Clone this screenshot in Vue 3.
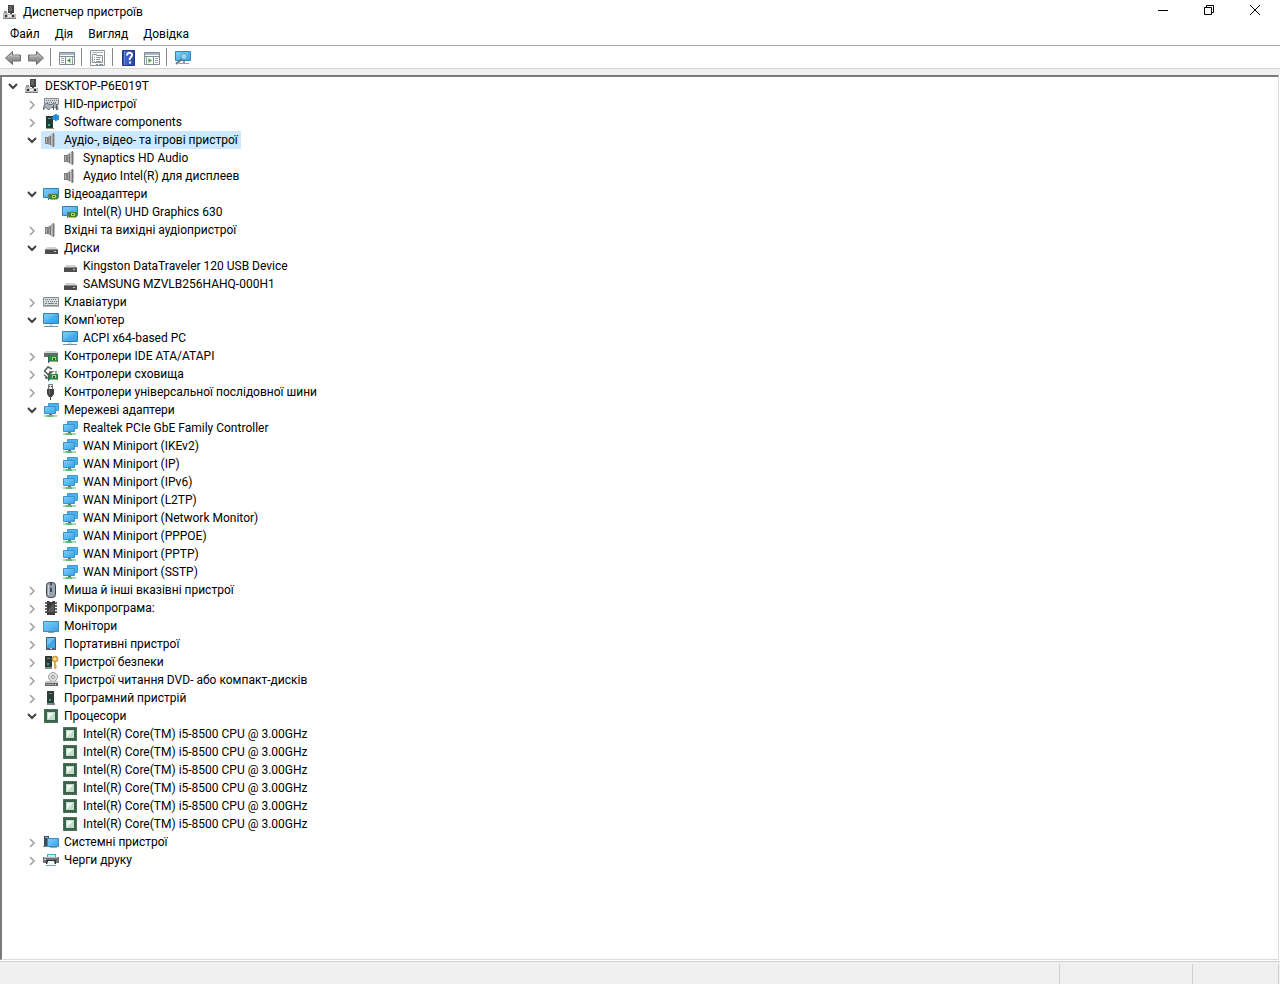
<script setup>
import { ref, computed } from 'vue'

const menus = ['Файл', 'Дія', 'Вигляд', 'Довідка']

const toolbar = [
  { icon: 'back', label: 'Назад' },
  { icon: 'forward', label: 'Вперед' },
  { sep: true },
  { icon: 'tree-pane', label: 'Дерево консолі' },
  { sep: true },
  { icon: 'properties', label: 'Властивості' },
  { sep: true },
  { icon: 'help', label: 'Довідка' },
  { icon: 'action-pane', label: 'Панель дій' },
  { sep: true },
  { icon: 'scan', label: 'Оновити конфігурацію обладнання' },
]

const many = (icon, names) => names.map((name) => ({ name, icon }))

const root = {
  name: 'DESKTOP-P6E019T',
  icon: 'host',
  open: true,
  children: [
    { name: 'HID-пристрої', icon: 'hid', children: [] },
    { name: 'Software components', icon: 'software', children: [] },
    {
      name: 'Аудіо-, відео- та ігрові пристрої', icon: 'speaker', open: true,
      children: many('speaker', ['Synaptics HD Audio', 'Аудио Intel(R) для дисплеев']),
    },
    { name: 'Відеоадаптери', icon: 'display', open: true, children: many('display', ['Intel(R) UHD Graphics 630']) },
    { name: 'Вхідні та вихідні аудіопристрої', icon: 'speaker', children: [] },
    {
      name: 'Диски', icon: 'disk', open: true,
      children: many('disk', ['Kingston DataTraveler 120 USB Device', 'SAMSUNG MZVLB256HAHQ-000H1']),
    },
    { name: 'Клавіатури', icon: 'keyboard', children: [] },
    { name: "Комп'ютер", icon: 'computer', open: true, children: many('computer', ['ACPI x64-based PC']) },
    { name: 'Контролери IDE ATA/ATAPI', icon: 'ide', children: [] },
    { name: 'Контролери сховища', icon: 'storage', children: [] },
    { name: 'Контролери універсальної послідовної шини', icon: 'usb', children: [] },
    {
      name: 'Мережеві адаптери', icon: 'network', open: true,
      children: many('network', [
        'Realtek PCIe GbE Family Controller',
        'WAN Miniport (IKEv2)',
        'WAN Miniport (IP)',
        'WAN Miniport (IPv6)',
        'WAN Miniport (L2TP)',
        'WAN Miniport (Network Monitor)',
        'WAN Miniport (PPPOE)',
        'WAN Miniport (PPTP)',
        'WAN Miniport (SSTP)',
      ]),
    },
    { name: 'Миша й інші вказівні пристрої', icon: 'mouse', children: [] },
    { name: 'Мікропрограма:', icon: 'firmware', children: [] },
    { name: 'Монітори', icon: 'monitor', children: [] },
    { name: 'Портативні пристрої', icon: 'portable', children: [] },
    { name: 'Пристрої безпеки', icon: 'security', children: [] },
    { name: 'Пристрої читання DVD- або компакт-дисків', icon: 'dvd', children: [] },
    { name: 'Програмний пристрій', icon: 'tower', children: [] },
    {
      name: 'Процесори', icon: 'cpu', open: true,
      children: many('cpu', Array(6).fill('Intel(R) Core(TM) i5-8500 CPU @ 3.00GHz')),
    },
    { name: 'Системні пристрої', icon: 'system', children: [] },
    { name: 'Черги друку', icon: 'printer', children: [] },
  ],
}

const collect = (node, path, out) => {
  if (node.open) out.push(path)
  ;(node.children || []).forEach((child, i) => collect(child, `${path}-${i}`, out))
  return out
}
const opened = ref(new Set(collect(root, '0', [])))
const selected = ref('0-2')

const rows = computed(() => {
  const list = []
  const walk = (node, path, depth) => {
    const open = opened.value.has(path)
    list.push({ path, depth, open, name: node.name, icon: node.icon, branch: !!node.children })
    if (open) node.children.forEach((child, i) => walk(child, `${path}-${i}`, depth + 1))
  }
  walk(root, '0', 0)
  return list
})

const toggle = (path) => {
  const next = new Set(opened.value)
  next.has(path) ? next.delete(path) : next.add(path)
  opened.value = next
}
</script>

<template>
  <div class="window">
    <svg class="defs" aria-hidden="true">
      <defs>
        <linearGradient id="g-screen" x1="0" y1="0" x2="1" y2="1">
          <stop offset="0" stop-color="#7fd0f8" />
          <stop offset="0.5" stop-color="#5bb9f0" />
          <stop offset="1" stop-color="#3a9fe2" />
        </linearGradient>
        <linearGradient id="g-arrow" x1="0" y1="0" x2="0" y2="1">
          <stop offset="0" stop-color="#b9b9b9" />
          <stop offset="1" stop-color="#7c7c7c" />
        </linearGradient>
        <linearGradient id="g-metal" x1="0" y1="0" x2="1" y2="0">
          <stop offset="0" stop-color="#777" />
          <stop offset="0.5" stop-color="#c8c8c8" />
          <stop offset="1" stop-color="#8a8a8a" />
        </linearGradient>
        <linearGradient id="g-help" x1="0" y1="0" x2="1" y2="0">
          <stop offset="0" stop-color="#24409a" />
          <stop offset="0.3" stop-color="#3f62c6" />
          <stop offset="1" stop-color="#2a48a8" />
        </linearGradient>
      </defs>

      <symbol id="i-host" viewBox="0 0 16 16">
        <path d="M6 1h6v8H6z" fill="#444" />
        <path d="M7 2h3v5H7z" fill="#666" />
        <path d="M2 7h3v2H2z" fill="#8e8e8e" />
        <path d="M8 9h2v2H8z" fill="#444" />
        <path d="M1 9h5v1h8v5H1z" fill="#bdbdbd" />
        <path d="M1 14h13v1H1z" fill="#7d7d7d" />
        <path d="M3 11h2v2H3zM10 11h2v2h-2z" fill="#2d2d2d" />
        <path d="M6 11h3v2H6z" fill="#eee" />
      </symbol>

      <symbol id="i-hid" viewBox="0 0 16 16">
        <path d="M1.500 2.500h14v6h-14z" fill="#d5d8da" stroke="#858b90" />
        <path d="M3 4.500h11M4 6.500h10" stroke="#6d757a" stroke-dasharray="1 1" />
        <path d="M.5 13.500c0-4 1-6 3-6s2 1 4 1 2-1 4-1 3 2 3.500 6c-2 0-2-2-3.500-2h-3c-1 0-1.500 2-3 2s-1-2-2.500-2-1 2-2.500 2z" fill="#aab3b9" stroke="#5f6a71" />
        <path d="M10.500 9v5M13.500 8v6" stroke="#566269" />
      </symbol>

      <symbol id="i-tower" viewBox="0 0 16 16">
        <path d="M4 1h7v12H4z" fill="#2d3c39" />
        <path d="M6 3h3v1H6z" fill="#6f8580" />
        <path d="M6 9h2v2H6z" fill="#2fae63" />
        <path d="M4 13h8v2H4z" fill="#7f8886" />
      </symbol>

      <symbol id="i-software" viewBox="0 0 16 16">
        <path d="M3 2h7v12H3z" fill="#223b38" />
        <path d="M5 4h3v1H5z" fill="#77918c" />
        <path d="M5 10h2v2H5z" fill="#33b868" />
        <path d="M3 14h8v1H3z" fill="#8f9795" />
        <path d="M10 1h2V0h2v1h2v5h-2v1h-2V6h-2V5H9V3h1z" fill="#2c9ae0" />
        <path d="M9 3.500h7M12.500 0v7" stroke="#2b80c4" />
      </symbol>

      <symbol id="i-speaker" viewBox="0 0 16 16">
        <path d="M2 5h3v7H2z" fill="#7c7c7c" />
        <path d="M3 6h1v5H3z" fill="#b5b5b5" />
        <path d="M5 5l5-4h1v14h-1l-5-3z" fill="url(#g-metal)" />
        <path d="M7.500 4v9M10.500 1v14" stroke="#777" />
        <path d="M11.500 2v12" stroke="#bbb" />
      </symbol>

      <symbol id="i-computer" viewBox="0 0 16 16">
        <path d="M.5 1.500h15v10H.5z" fill="url(#g-screen)" stroke="#2d7fb4" />
        <path d="M2 10L13 2h2v9H2z" fill="#2f98e4" opacity=".35" />
        <path d="M6 12h4v2H6z" fill="#d5dde2" />
        <path d="M1 14h14v1H1z" fill="#7c8f9b" />
      </symbol>

      <symbol id="i-monitor" viewBox="0 0 16 16">
        <path d="M.5 3.500h15v10H.5z" fill="url(#g-screen)" stroke="#3c8dc0" />
        <path d="M5 14h6v1H5z" fill="#8fa0aa" />
      </symbol>

      <symbol id="i-display" viewBox="0 0 16 16">
        <path d="M.5 2.500h15v9H.5z" fill="url(#g-screen)" stroke="#2d7fb4" />
        <path d="M6 8h9v5H6z" fill="#37883b" />
        <path d="M5 8h1v6H5z" fill="#777" />
        <path d="M9 9h4v3H9z" fill="#c9cf4d" />
        <path d="M10 10h2v1h-2z" fill="#35552c" />
        <path d="M7 13h7v1H7z" fill="#d2b22e" />
      </symbol>

      <symbol id="i-disk" viewBox="0 0 16 16">
        <path d="M4 7h9l2 3H2z" fill="#d2d2d2" />
        <path d="M2 9h13v5H2z" fill="#4d4d4d" />
        <path d="M2 9h13v1H2z" fill="#8c8c8c" />
        <path d="M11 11h2v1h-2z" fill="#a9e0ac" />
      </symbol>

      <symbol id="i-keyboard" viewBox="0 0 16 16">
        <path d="M.5 3.500h15v8H.5z" fill="#d9dcdd" stroke="#858d91" />
        <path d="M2 5.500h12M3 7.500h11" stroke="#737d81" stroke-dasharray="1 1" />
        <path d="M2 9.500h2M5 9.500h6M12 9.500h2" stroke="#7b8589" />
        <path d="M0 12h16v1H0z" fill="#b3b9bb" />
      </symbol>

      <symbol id="i-ide" viewBox="0 0 16 16">
        <path d="M3 3h10l2 2H1z" fill="#d0d0d0" />
        <path d="M1 5h14v4H1z" fill="#676c6b" />
        <path d="M6 8h9v6H6z" fill="#2d8a45" />
        <path d="M5 7h1v8H5z" fill="#555" />
        <path d="M9 9h4v3H9z" fill="#c6cc62" />
        <path d="M10 10h2v2h-2z" fill="#285634" />
        <path d="M7 13h7v1H7z" fill="#c8a53d" />
      </symbol>

      <symbol id="i-storage" viewBox="0 0 16 16">
        <path d="M9 3L5 1 1.500 5 5 8.500l4-2.500H6" fill="none" stroke="#555c5c" stroke-width="1.500" />
        <path d="M1 9l3 2M2 12h3" stroke="#555c5c" stroke-width="1.500" />
        <path d="M6 8h9v6H6z" fill="#2d8a45" />
        <path d="M5 8h1v7H5z" fill="#555" />
        <path d="M9 9h4v3H9z" fill="#b9c9aa" />
        <path d="M10 10h2v2h-2z" fill="#285634" />
        <path d="M12 5h2v3h-2z" fill="#a2a8a8" />
        <path d="M7 13h7v1H7z" fill="#c8a53d" />
      </symbol>

      <symbol id="i-usb" viewBox="0 0 16 16">
        <path d="M5.500 .5h4v5h-4z" fill="#e4e4e4" stroke="#777" />
        <path d="M6 2h1v1H6zM8 2h1v1H8z" fill="#444" />
        <path d="M4 5h7v5l-2 3H6l-2-3z" fill="#404040" />
        <path d="M6 6h1v4H6z" fill="#777" />
        <path d="M7 12h1v4H7z" fill="#444" />
      </symbol>

      <symbol id="i-network" viewBox="0 0 16 16">
        <path d="M5.500 1.500h10v7h-10z" fill="#4fb2ee" stroke="#3c9bd2" />
        <path d="M1.500 4.500h11v7h-11z" fill="url(#g-screen)" stroke="#3593ce" />
        <path d="M6 12h3v1H6z" fill="#427e62" />
        <path d="M1 13h13v2H1z" fill="#a5dcaa" />
        <path d="M4 13h6v2H4z" fill="#5fbb76" />
      </symbol>

      <symbol id="i-mouse" viewBox="0 0 16 16">
        <rect x="3.500" y=".5" width="9" height="15" rx="3" fill="#9aa3ae" stroke="#3b434c" />
        <path d="M5 3h1v10H5z" fill="#cdd4db" />
        <path d="M7 1h2v9H7z" fill="#3f4c5d" />
        <path d="M8 3v3" stroke="#b9d7f3" />
      </symbol>

      <symbol id="i-firmware" viewBox="0 0 16 16">
        <path d="M2 2h2v2H2zM2 5h2v2H2zM2 8h2v2H2zM2 11h2v2H2zM12 2h2v2h-2zM12 5h2v2h-2zM12 8h2v2h-2zM12 11h2v2h-2z" fill="#666" />
        <path d="M4 1h2l1 1h2l1-1h2v14H4z" fill="#3d3d3d" />
        <path d="M5 11l5-7h1v8H5z" fill="#5a5a5a" />
      </symbol>

      <symbol id="i-portable" viewBox="0 0 16 16">
        <path d="M3.500 1.500h9v12h-9z" fill="#3fa5e6" stroke="#3c5a70" />
        <path d="M4 2h8l-8 8z" fill="#6fc3f3" />
        <path d="M3 12h10v2H3z" fill="#4e626f" />
        <path d="M7 12h2v1H7z" fill="#c8d6df" />
      </symbol>

      <symbol id="i-security" viewBox="0 0 16 16">
        <path d="M2 2h7v11H2z" fill="#2c3b37" />
        <path d="M4 4h3v1H4z" fill="#70857e" />
        <path d="M4 9h2v2H4z" fill="#2fae63" />
        <path d="M2 13h7v2H2z" fill="#858d8a" />
        <circle cx="12" cy="5" r="2.500" fill="#f3e0a8" stroke="#cc9c37" stroke-width="1.500" />
        <path d="M11 8h2v7h-2zM13 11h1v1h-1zM13 13h1v1h-1z" fill="#d9ac46" />
      </symbol>

      <symbol id="i-dvd" viewBox="0 0 16 16">
        <circle cx="10" cy="5" r="4.500" fill="#dedede" stroke="#a1a1a1" />
        <circle cx="10" cy="5" r="1.500" fill="#fff" stroke="#8d8d8d" />
        <path d="M3 9h11l1 2H2z" fill="#c5c5c5" />
        <path d="M2 11h13v3H2z" fill="#646464" />
        <path d="M3 12h8v1H3z" fill="#a1a1a1" />
        <path d="M12 12h1v1h-1z" fill="#f0f0f0" />
      </symbol>

      <symbol id="i-cpu" viewBox="0 0 16 16">
        <path d="M1 1h14v14H1z" fill="#3a6349" />
        <path d="M1.500 1v14M14.500 1v14M1 1.500h14M1 14.500h14" stroke="#5d846a" stroke-dasharray="1 1" />
        <path d="M4 4h8v8H4z" fill="#c3dccb" />
        <path d="M5 5h6l-6 6z" fill="#f0f7f1" />
      </symbol>

      <symbol id="i-system" viewBox="0 0 16 16">
        <path d="M1 2h5v10H1z" fill="#3c4c55" />
        <path d="M2 3h3v1H2z" fill="#a2b4bc" />
        <path d="M0 12h5v1H0z" fill="#77858c" />
        <path d="M4.500 4.500h11v8h-11z" fill="url(#g-screen)" stroke="#3a8cc0" />
        <path d="M7 13h7v1H7z" fill="#9aa9b2" />
      </symbol>

      <symbol id="i-printer" viewBox="0 0 16 16">
        <path d="M4 2h9v4H4z" fill="#4fa9bd" />
        <path d="M5 3h7v3H5z" fill="#c6ecf4" />
        <path d="M0 5h16v6H0z" fill="#6c7274" />
        <path d="M1 5h14v1H1z" fill="#b5babc" />
        <path d="M3 8h10v4H3z" fill="#333" />
        <path d="M5 9h6l1 4H4z" fill="#f3f8fa" />
        <path d="M3 13h10v1H3z" fill="#6fa9bd" />
        <path d="M1 7h2v1H1z" fill="#e9eeee" />
      </symbol>

      <symbol id="i-back" viewBox="0 0 16 16">
        <path d="M.5 8L7.500 1.500V5h8v6h-8v3.500z" fill="url(#g-arrow)" stroke="#6c6c6c" stroke-linejoin="round" />
        <path d="M3 7.500L6.500 4v2H14" fill="none" stroke="#c4c4c4" />
      </symbol>
      <symbol id="i-forward" viewBox="0 0 16 16">
        <path d="M15.500 8L8.500 1.500V5h-8v6h8v3.500z" fill="url(#g-arrow)" stroke="#6c6c6c" stroke-linejoin="round" />
        <path d="M13 7.500L9.500 4v2H2" fill="none" stroke="#c4c4c4" />
      </symbol>
      <symbol id="i-tree-pane" viewBox="0 0 16 16">
        <path d="M.5 2.500h15v12H.5z" fill="#fff" stroke="#7f8b95" />
        <path d="M1 3h14v2H1z" fill="#a9b7c4" />
        <path d="M1 6.500h14M6.500 7v7" stroke="#7f8b95" />
        <path d="M2 8.500h3M2 10.500h3M2 12.500h3M13.500 7v7" stroke="#93a2ad" />
        <path d="M11.500 8v5L8 10.500z" fill="#46a33b" />
      </symbol>
      <symbol id="i-action-pane" viewBox="0 0 16 16">
        <path d="M.5 2.500h15v12H.5z" fill="#fff" stroke="#7f8b95" />
        <path d="M1 3h14v2H1z" fill="#a9b7c4" />
        <path d="M1 6.500h14M9.500 7v7" stroke="#7f8b95" />
        <path d="M11 8.500h3M11 10.500h3M11 12.500h3M2.500 7v7" stroke="#93a2ad" />
        <path d="M4.500 8v5L8 10.500z" fill="#46a33b" />
      </symbol>
      <symbol id="i-properties" viewBox="0 0 16 16">
        <path d="M.5 .5h14v15H.5z" fill="#fbfbfb" stroke="#8c9399" />
        <path d="M2 2.500h11" stroke="#a9b0b6" />
        <path d="M2.500 5.500v-1h4v1h6v7h-10z" fill="#fff" stroke="#8c9399" />
        <path d="M4 7.500h1M6 7.500h5M4 9.500h1M6 9.500h4M4 11.500h1M6 11.500h5" stroke="#8d99a3" />
        <path d="M6 14.500h2M9 14.500h4" stroke="#8c9399" />
      </symbol>
      <symbol id="i-help" viewBox="0 0 16 16">
        <path d="M1.500 .5h12v15h-12z" fill="url(#g-help)" stroke="#24387e" />
        <path d="M3.500 1v14" stroke="#6e8adc" />
        <path d="M6 5.500c0-3.500 5-3.500 5-.5C11 7 8.500 7.500 8.500 10" fill="none" stroke="#fff" stroke-width="2" />
        <path d="M8 11.500h2v2H8z" fill="#fff" />
      </symbol>
      <symbol id="i-scan" viewBox="0 0 16 16">
        <path d="M.5 1.500h15v9H.5z" fill="url(#g-screen)" stroke="#3187b8" />
        <path d="M8 11h2v2H8zM4 13h10v1H4z" fill="#8fa1ac" />
        <circle cx="9" cy="6.500" r="3" fill="#c4e9fc" fill-opacity=".6" stroke="#5f9fc4" />
        <path d="M7 9l-6 5" stroke="#627986" stroke-width="2" />
      </symbol>
    </svg>

    <header class="titlebar">
      <svg class="icon"><use href="#i-host" /></svg>
      <h1 class="title">Диспетчер пристроїв</h1>
      <div class="caption-buttons">
        <button type="button" aria-label="Згорнути">
          <svg class="glyph" viewBox="0 0 12 12"><path d="M1 5.500h10" /></svg>
        </button>
        <button type="button" aria-label="Відновити">
          <svg class="glyph" viewBox="0 0 12 12"><path d="M1.500 2.500h7v7h-7zM3.500 2V.5h7v7H9" /></svg>
        </button>
        <button type="button" aria-label="Закрити">
          <svg class="glyph" viewBox="0 0 12 12"><path d="M1 0l10 10M11 0L1 10" /></svg>
        </button>
      </div>
    </header>

    <nav class="menubar">
      <button v-for="menu in menus" :key="menu" type="button">{{ menu }}</button>
    </nav>

    <div class="toolbar" role="toolbar">
      <template v-for="(item, i) in toolbar" :key="i">
        <span v-if="item.sep" class="sep"></span>
        <button v-else type="button" :aria-label="item.label">
          <svg class="icon"><use :href="`#i-${item.icon}`" /></svg>
        </button>
      </template>
    </div>

    <main class="pane">
      <ul class="tree" role="tree">
        <li
          v-for="row in rows"
          :key="row.path"
          class="row"
          role="treeitem"
          :aria-level="row.depth + 1"
          :aria-expanded="row.branch ? row.open : undefined"
          :aria-selected="selected === row.path"
        >
          <span v-for="n in row.depth" :key="n" class="indent"></span>
          <button
            v-if="row.branch"
            type="button"
            class="expander"
            :class="{ open: row.open }"
            :aria-label="row.open ? 'Згорнути' : 'Розгорнути'"
            @click="toggle(row.path)"
          >
            <svg class="chevron" viewBox="0 0 10 10">
              <path v-if="row.open" d="M1 3l4 4 4-4" />
              <path v-else d="M3 1l4 4-4 4" />
            </svg>
          </button>
          <span v-else class="indent"></span>
          <button
            type="button"
            class="node"
            :class="{ selected: selected === row.path }"
            @click="selected = row.path"
            @dblclick="row.branch && toggle(row.path)"
          >
            <svg class="icon"><use :href="`#i-${row.icon}`" /></svg>
            <span>{{ row.name }}</span>
          </button>
        </li>
      </ul>
    </main>

    <footer class="statusbar">
      <span class="cell main"></span>
      <span class="cell wide"></span>
      <span class="cell narrow"></span>
    </footer>
  </div>
</template>

<style>
html,
body {
  margin: 0;
  background: #fff;
}
</style>

<style scoped>
.window {
  display: flex;
  flex-direction: column;
  min-height: 100vh;
  background: #fff;
  color: #000;
  font-family: Roboto, "Open Sans", sans-serif;
  font-size: 12px;
  line-height: 18px;
}
.defs {
  position: absolute;
  width: 0;
  height: 0;
}
button {
  box-sizing: border-box;
  margin: 0;
  padding: 0;
  border: 0;
  background: none;
  color: inherit;
  font: inherit;
}
.icon {
  flex: none;
  width: 16px;
  height: 16px;
}

.titlebar {
  display: flex;
  align-items: center;
  height: 23px;
  padding: 0 2px;
}
.title {
  flex: 1;
  margin: 0 0 0 5px;
  font-size: 12px;
  font-weight: 400;
}
.caption-buttons {
  display: flex;
  align-self: stretch;
}
.caption-buttons button {
  display: flex;
  align-items: center;
  justify-content: center;
  width: 46px;
  padding-bottom: 2px;
}
.glyph {
  width: 12px;
  height: 12px;
  fill: none;
  stroke: #000;
}

.menubar {
  display: flex;
  gap: 1px;
  height: 22px;
  padding-left: 3px;
  border-bottom: 1px solid #a6a6a6;
}
.menubar button {
  padding: 0 7px;
}

.toolbar {
  display: flex;
  align-items: center;
  height: 22px;
  padding: 0 1px;
  border-bottom: 1px solid #d4d4d4;
}
.toolbar button {
  display: flex;
  align-items: center;
  justify-content: center;
  width: 23px;
  height: 22px;
  padding-top: 2px;
}
.sep {
  box-sizing: border-box;
  width: 8px;
  height: 18px;
  padding-left: 3px;
}
.sep::before {
  content: "";
  display: block;
  width: 1px;
  height: 100%;
  background: #8a8a8a;
}

.pane {
  display: flex;
  flex: 1;
  padding: 0 1px 1px 0;
  border-top: 6px solid #f0f0f0;
}
.tree {
  flex: 1;
  margin: 0;
  padding: 0 0 0 1px;
  border: 2px solid #7a7a7a;
  border-right: 1px solid #dcdcdc;
  border-bottom: 1px solid #dcdcdc;
  list-style: none;
}
.row {
  display: flex;
  height: 18px;
}
.indent,
.expander {
  flex: none;
  width: 19px;
}
.expander {
  display: flex;
  align-items: center;
  justify-content: center;
  padding-top: 2px;
}
.expander.open {
  padding-top: 0;
}
.chevron {
  width: 10px;
  height: 10px;
  fill: none;
  stroke: #a0a0a0;
  stroke-width: 1.500;
}
.open .chevron {
  stroke: #404040;
  stroke-width: 2;
}
.node {
  display: flex;
  align-items: center;
  gap: 5px;
  padding: 0 3px 0 2px;
  white-space: nowrap;
}
.node.selected {
  background: #cce8ff;
}

.statusbar {
  display: flex;
  height: 22px;
  border-top: 1px solid #d0d0d0;
  background: #f0f0f0;
}
.cell {
  box-sizing: border-box;
  margin-top: 2px;
  border-right: 1px solid #d0d0d0;
}
.main {
  flex: 1;
}
.wide {
  width: 133px;
}
.narrow {
  width: 86px;
  margin-right: 1px;
}
</style>
